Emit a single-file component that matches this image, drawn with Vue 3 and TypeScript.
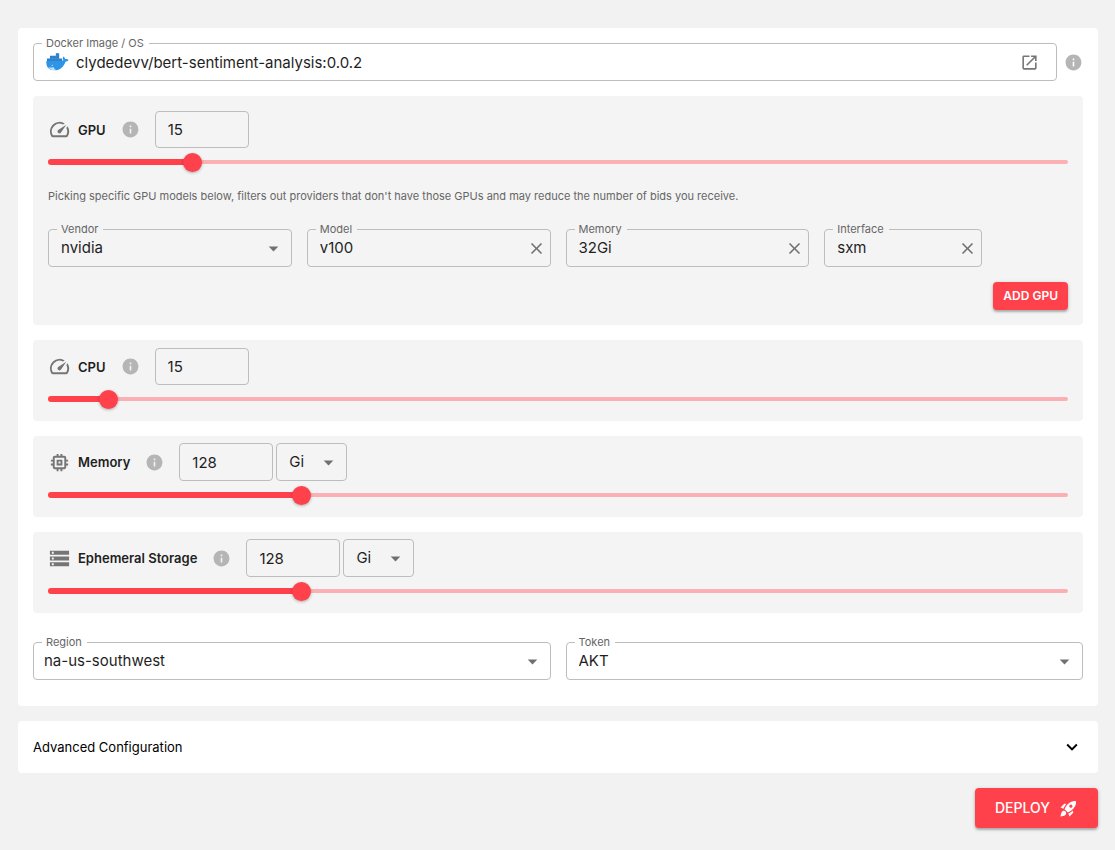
<script setup lang="ts">
import { computed, reactive, ref } from 'vue'

interface Resource {
  id: string
  name: string
  icon: string
  value: number
  min: number
  max: number
  step: number
  unit?: string
}

const icons = {
  speed:
    'm20.38 8.57-1.23 1.85a8 8 0 0 1-.22 7.58H5.07A8 8 0 0 1 15.58 6.85l1.85-1.23A10 10 0 0 0 3.35 19a2 2 0 0 0 1.72 1h13.85a2 2 0 0 0 1.74-1 10 10 0 0 0-.27-10.44zm-9.79 6.84a2 2 0 0 0 2.83 0l5.66-8.49-8.49 5.66a2 2 0 0 0 0 2.83z',
  memory:
    'M15 9H9v6h6V9zm-2 4h-2v-2h2v2zm8-2V9h-2V7c0-1.1-.9-2-2-2h-2V3h-2v2h-2V3H9v2H7c-1.1 0-2 .9-2 2v2H3v2h2v2H3v2h2v2c0 1.1.9 2 2 2h2v2h2v-2h2v2h2v-2h2c1.1 0 2-.9 2-2v-2h2v-2h-2v-2h2zm-4 6H7V7h10v10z',
  storage: 'M2 20h20v-4H2v4zm2-3h2v2H4v-2zM2 4v4h20V4H2zm4 3H4V5h2v2zm-4 7h20v-4H2v4zm2-3h2v2H4v-2z',
  info: 'M12 2C6.48 2 2 6.48 2 12s4.48 10 10 10 10-4.48 10-10S17.52 2 12 2zm1 15h-2v-6h2v6zm0-8h-2V7h2v2z',
  open: 'M19 19H5V5h7V3H5c-1.11 0-2 .9-2 2v14c0 1.1.89 2 2 2h14c1.1 0 2-.9 2-2v-7h-2v7zM14 3v2h3.59l-9.83 9.83 1.41 1.41L19 6.41V10h2V3h-7z',
  close: 'M19 6.41L17.59 5 12 10.59 6.41 5 5 6.41 10.59 12 5 17.59 6.41 19 12 13.41 17.59 19 19 17.59 13.41 12z',
  caret: 'M7 10l5 5 5-5z',
  expand: 'M16.59 8.59 12 13.17 7.41 8.59 6 10l6 6 6-6z',
  rocket:
    'M9.19 6.35c-2.04 2.29-3.44 5.58-3.57 5.89L2 10.69l4.05-4.05c.47-.47 1.15-.68 1.81-.55l1.33.26zM11.17 17s3.74-1.55 5.89-3.7c5.4-5.4 4.5-9.62 4.21-10.57-.95-.3-5.17-1.19-10.57 4.21C8.55 9.09 7 12.83 7 12.83L11.17 17zm6.48-2.19c-2.29 2.04-5.58 3.44-5.89 3.57L13.31 22l4.05-4.05c.47-.47.68-1.15.55-1.81l-.26-1.33zM9 18c0 .83-.34 1.58-.88 2.12C6.94 21.3 2 22 2 22s.7-4.94 1.88-6.12A2.996 2.996 0 0 1 9 18zm4-9c0-1.1.9-2 2-2s2 .9 2 2-.9 2-2 2-2-.9-2-2z',
}

const image = ref('clydedevv/bert-sentiment-analysis:0.0.2')
const vendor = ref('nvidia')
const region = ref('na-us-southwest')
const token = ref('AKT')

const gpuFilters = reactive([
  { id: 'model', label: 'Model', value: 'v100' },
  { id: 'gpu-memory', label: 'Memory', value: '32Gi' },
  { id: 'interface', label: 'Interface', value: 'sxm' },
])

const resources = reactive<Resource[]>([
  { id: 'gpu', name: 'GPU', icon: icons.speed, value: 15, min: 1, max: 100, step: 1 },
  { id: 'cpu', name: 'CPU', icon: icons.speed, value: 15, min: 0, max: 256, step: 1 },
  { id: 'memory', name: 'Memory', icon: icons.memory, value: 128, min: 1, max: 512, step: 1, unit: 'Gi' },
  { id: 'storage', name: 'Ephemeral Storage', icon: icons.storage, value: 128, min: 1, max: 512, step: 1, unit: 'Gi' },
])

const fills = computed(() => resources.map((r) => `${((r.value - r.min) / (r.max - r.min)) * 100}%`))
</script>

<template>
  <main class="page">
    <form class="card" @submit.prevent>
      <div class="image-row">
        <div class="field image-field">
          <label class="field-label" for="image">Docker Image / OS</label>
          <svg class="whale" viewBox="0 0 70 54" aria-hidden="true">
            <path fill="#2b7fc9" d="M30 0H40V16H49V26H3V16H12V8H30z" />
            <path
              fill="none"
              stroke="#5aa2de"
              stroke-width="1"
              d="M12 16.5H40M30 8H40M12 16V25M21 8V25M30 8V25M40 16V25"
            />
            <path
              fill="#2d94e6"
              d="M1 24H47C50 24 52 23 53 21C50 17 51 13 53 10C56 12 58 15 58 18C62 17 66 18 69 20C67 24 64 26 59 26C54 42 43 52 26 52C9 52 0 44 1 24Z"
            />
            <path fill="#c3e2f8" d="M7 43C13 45 19 44 23 42C24 46 27 50 31 51C20 53 11 50 7 43Z" />
            <circle cx="19" cy="37" r="2" fill="#c3e2f8" />
          </svg>
          <input id="image" v-model="image" class="control" type="text" />
          <a class="open-link" href="#" aria-label="Open image page">
            <svg class="icon-small" viewBox="0 0 24 24"><path :d="icons.open" /></svg>
          </a>
        </div>
        <svg class="icon-small info" viewBox="0 0 24 24"><path :d="icons.info" /></svg>
      </div>

      <section
        v-for="(r, i) in resources"
        :key="r.id"
        class="panel"
        :class="{ 'panel-gpu': r.id === 'gpu', 'panel-unit': r.unit }"
      >
        <div class="panel-head">
          <svg class="icon" viewBox="0 0 24 24"><path :d="r.icon" /></svg>
          <label class="panel-title" :for="r.id">{{ r.name }}</label>
          <svg class="icon-small info" viewBox="0 0 24 24"><path :d="icons.info" /></svg>
          <div class="amount">
            <input :id="r.id" v-model.number="r.value" class="number" type="number" :min="r.min" :max="r.max" />
            <div v-if="r.unit" class="field unit">
              <select v-model="r.unit" class="control" :aria-label="r.name + ' unit'">
                <option>Mi</option>
                <option>Gi</option>
                <option>Ti</option>
              </select>
              <svg class="caret" viewBox="0 0 24 24"><path :d="icons.caret" /></svg>
            </div>
          </div>
        </div>
        <div class="slider">
          <div class="rail"></div>
          <div class="fill" :style="{ width: fills[i] }"></div>
          <input
            v-model.number="r.value"
            class="range"
            type="range"
            :min="r.min"
            :max="r.max"
            :step="r.step"
            :aria-label="r.name + ' amount'"
          />
        </div>

        <template v-if="r.id === 'gpu'">
          <p class="hint">
            Picking specific GPU models below, filters out providers that don't have those GPUs and may reduce the number
            of bids you receive.
          </p>
          <div class="gpu-grid">
            <div class="field">
              <label class="field-label" for="vendor">Vendor</label>
              <select id="vendor" v-model="vendor" class="control">
                <option>nvidia</option>
              </select>
              <svg class="caret" viewBox="0 0 24 24"><path :d="icons.caret" /></svg>
            </div>
            <div v-for="f in gpuFilters" :key="f.id" class="field" :class="{ narrow: f.id === 'interface' }">
              <label class="field-label" :for="f.id">{{ f.label }}</label>
              <input :id="f.id" v-model="f.value" class="control" type="text" />
              <button class="clear" type="button" :aria-label="'Clear ' + f.label" @click="f.value = ''">
                <svg viewBox="0 0 24 24"><path :d="icons.close" /></svg>
              </button>
            </div>
          </div>
          <div class="actions">
            <button class="button add" type="button">ADD GPU</button>
          </div>
        </template>
      </section>

      <div class="placement">
        <div class="field">
          <label class="field-label" for="region">Region</label>
          <select id="region" v-model="region" class="control region">
            <option>na-us-southwest</option>
          </select>
          <svg class="caret" viewBox="0 0 24 24"><path :d="icons.caret" /></svg>
        </div>
        <div class="field">
          <label class="field-label" for="token">Token</label>
          <select id="token" v-model="token" class="control">
            <option>AKT</option>
          </select>
          <svg class="caret" viewBox="0 0 24 24"><path :d="icons.caret" /></svg>
        </div>
      </div>
    </form>

    <button class="advanced" type="button" aria-expanded="false">
      <span>Advanced Configuration</span>
      <svg viewBox="0 0 24 24"><path :d="icons.expand" /></svg>
    </button>

    <div class="actions">
      <button class="button deploy" type="button">
        <span>DEPLOY</span>
        <svg class="icon-small" viewBox="0 0 24 24"><path :d="icons.rocket" /></svg>
      </button>
    </div>
  </main>
</template>

<style>
body {
  background: #f2f2f2;
}
</style>

<style scoped>
* {
  box-sizing: border-box;
}

.page {
  --surface: #fff;
  --panel: #f4f4f4;
  --accent: #ff414c;
  --ink: #1f1f1f;
  --muted: #757575;
  display: flex;
  flex-direction: column;
  gap: 15px;
  padding: 28px 17px 20px 18px;
  font-family: Inter, 'Liberation Sans', sans-serif;
  font-size: 15px;
  line-height: 20px;
  color: var(--ink);
}

button,
input,
select {
  font: inherit;
  color: inherit;
}

svg {
  display: block;
  flex: none;
  fill: currentColor;
}

.card {
  display: flex;
  flex-direction: column;
  gap: 15px;
  padding: 15px 15px 26px;
  border-radius: 4px;
  background: var(--surface);
}

.image-row {
  display: flex;
  align-items: center;
  gap: 7px;
}

.field {
  position: relative;
  display: flex;
  align-items: center;
  height: 38px;
  min-width: 0;
  border: 1px solid #bdbdbd;
  border-radius: 4px;
  --notch: var(--surface);
}

.field-label {
  position: absolute;
  top: -8px;
  left: 8px;
  padding: 0 5px 0 4px;
  background: var(--notch);
  color: #666;
  font-size: 11px;
  line-height: 14px;
}

.control {
  flex: 1;
  min-width: 0;
  width: 100%;
  height: 100%;
  padding: 0 12px;
  border: 0;
  outline: 0;
  background: transparent;
  appearance: none;
}

input.control {
  padding-bottom: 1px;
}

.region {
  padding-left: 10px;
}

.caret {
  position: absolute;
  right: 6px;
  width: 23px;
  height: 23px;
  color: #707070;
  pointer-events: none;
}

.image-field {
  flex: 1;
}

.whale {
  width: 23px;
  height: 18px;
  margin-left: 12px;
}

.image-field .control {
  padding: 0 7px;
}

.open-link {
  margin-right: 17px;
  color: var(--muted);
}

.icon {
  width: 23px;
  height: 23px;
  color: var(--muted);
}

.icon-small {
  width: 19px;
  height: 19px;
}

.info {
  color: #b5b5b5;
}

.panel {
  padding: 8px 15px;
  border-radius: 4px;
  background: var(--panel);
}

.panel-unit {
  padding-top: 7px;
}

.panel-gpu {
  padding: 15px;
}

.panel .field {
  --notch: var(--panel);
}

.panel-head {
  display: flex;
  align-items: center;
  gap: 15px;
  height: 37px;
}

.panel-unit .panel-head {
  height: 38px;
}

.panel-title {
  margin-left: -8px;
  font-size: 13px;
  font-weight: 600;
}

.amount {
  display: flex;
  gap: 3px;
  height: 100%;
}

.number {
  width: 94px;
  height: 100%;
  padding: 0 12px;
  border: 1px solid #bdbdbd;
  border-radius: 4px;
  outline: 0;
  background: transparent;
  appearance: textfield;
}

.number::-webkit-inner-spin-button {
  appearance: none;
  margin: 0;
}

.unit {
  width: 71px;
}

.slider {
  display: grid;
  align-items: center;
  height: 28px;
}

.rail,
.fill,
.range {
  grid-area: 1 / 1;
}

.rail {
  height: 4px;
  border-radius: 2px;
  background: #fbb0b4;
}

.fill {
  height: 6px;
  border-radius: 3px;
  background: var(--accent);
}

.range {
  width: calc(100% + 18px);
  height: 20px;
  margin: 0 -9px;
  background: transparent;
  appearance: none;
}

.range::-webkit-slider-thumb {
  width: 19px;
  height: 19px;
  border-radius: 50%;
  background: var(--accent);
  box-shadow: 0 1px 3px rgba(0, 0, 0, 0.3);
  appearance: none;
}

.hint {
  margin: 10px 0 23px;
  color: #666;
  font-size: 11px;
}

.gpu-grid {
  display: grid;
  grid-template-columns: repeat(12, minmax(0, 1fr));
  gap: 15px;
  margin-bottom: 15px;
}

.gpu-grid .field {
  grid-column: span 3;
}

.gpu-grid .narrow {
  grid-column: span 2;
}

.clear {
  margin-right: 4px;
  padding: 0;
  border: 0;
  background: none;
  color: #707070;
}

.clear svg {
  width: 19px;
  height: 19px;
}

.actions {
  display: flex;
  justify-content: flex-end;
}

.button {
  display: flex;
  align-items: center;
  border: 0;
  border-radius: 4px;
  background: var(--accent);
  box-shadow: 0 2px 2px rgba(0, 0, 0, 0.2), 0 1px 4px rgba(0, 0, 0, 0.18);
  color: #fff;
}

.add {
  height: 28px;
  padding: 0 10px;
  font-size: 12px;
  font-weight: 600;
}

.deploy {
  gap: 9px;
  height: 40px;
  padding: 0 20px;
  font-size: 14px;
  font-weight: 500;
}

.placement {
  display: grid;
  grid-template-columns: repeat(2, minmax(0, 1fr));
  gap: 15px;
  margin-top: 14px;
}

.advanced {
  display: flex;
  align-items: center;
  justify-content: space-between;
  height: 52px;
  padding: 0 15px;
  border: 0;
  border-radius: 4px;
  background: var(--surface);
  color: #000;
  font-size: 13px;
}

.advanced svg {
  width: 22px;
  height: 22px;
}
</style>
